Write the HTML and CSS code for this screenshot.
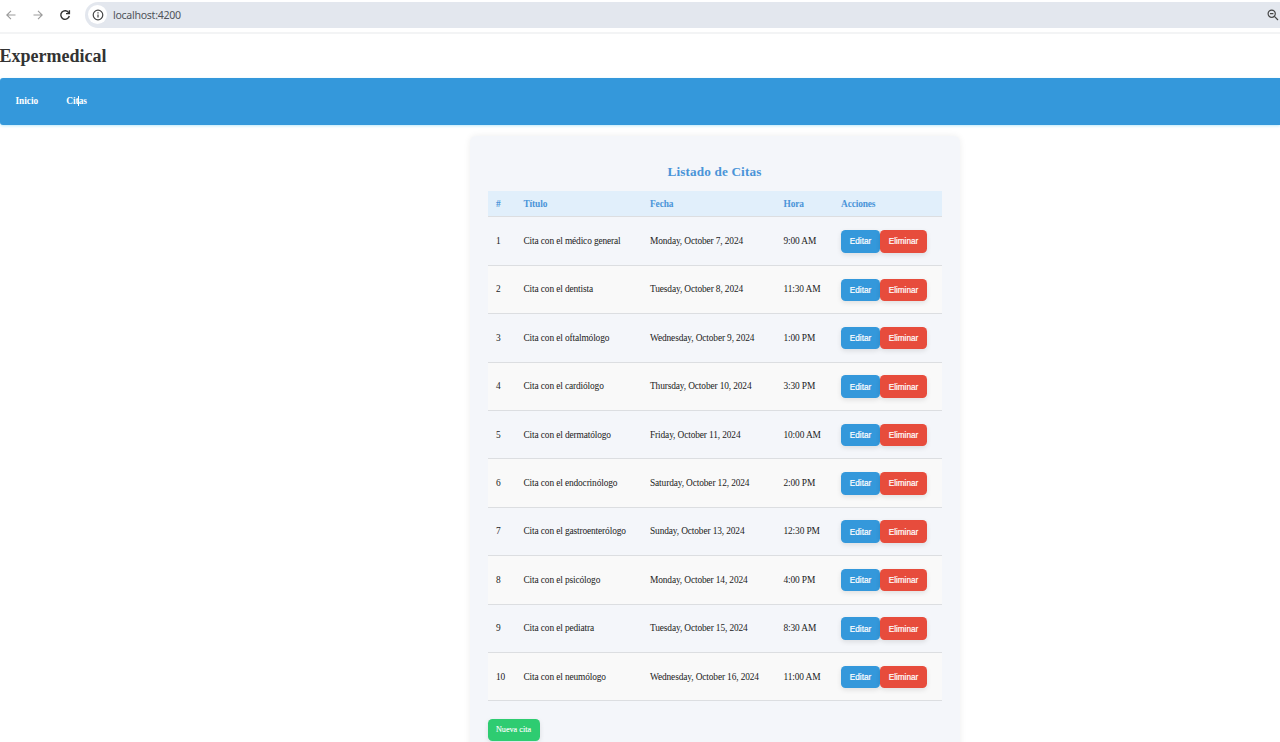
FILE: index.html
```html
<!DOCTYPE html>
<html lang="es">
<head>
<meta charset="utf-8">
<title>Expermedical</title>
<link rel="stylesheet" href="styles.css">
</head>
<body>
<div class="browser">
  <svg class="tool" viewBox="0 0 12 12"><path d="M10.5 6H2M6 1.8 1.8 6 6 10.2"/></svg>
  <svg class="tool" viewBox="0 0 12 12"><path d="M1.5 6H10M6 1.8 10.2 6 6 10.2"/></svg>
  <svg class="tool reload" viewBox="0 0 12 12"><path d="M9.8 3.8A4.3 4.3 0 1 0 10.3 7"/><path d="M10.4 1.2V4.6H7" /></svg>
  <div class="address">
    <span class="info"><svg viewBox="0 0 12 12"><circle cx="6" cy="6" r="4.8"/><path d="M6 5.4V8.6M6 3.3V4.5"/></svg></span>
    <span class="url">localhost:4200</span>
    <svg class="lens" viewBox="0 0 12 12"><circle cx="4.7" cy="4.7" r="3.6"/><path d="M3 4.7H6.4M7.4 7.4 11 11"/></svg>
  </div>
</div>
<h1>Expermedical</h1>
<nav><a>Inicio</a><a class="citas">Citas<i class="caret"></i></a></nav>
<main class="card">
  <h2>Listado de Citas</h2>
  <div class="table">
    <div class="row head"><span>#</span><span>Título</span><span>Fecha</span><span>Hora</span><span>Acciones</span></div>
    <div class="row"><span>1</span><span>Cita con el médico general</span><span>Monday, October 7, 2024</span><span>9:00 AM</span><div class="actions"><button class="edit">Editar</button><button class="delete">Eliminar</button></div></div>
    <div class="row"><span>2</span><span>Cita con el dentista</span><span>Tuesday, October 8, 2024</span><span>11:30 AM</span><div class="actions"><button class="edit">Editar</button><button class="delete">Eliminar</button></div></div>
    <div class="row"><span>3</span><span>Cita con el oftalmólogo</span><span>Wednesday, October 9, 2024</span><span>1:00 PM</span><div class="actions"><button class="edit">Editar</button><button class="delete">Eliminar</button></div></div>
    <div class="row"><span>4</span><span>Cita con el cardiólogo</span><span>Thursday, October 10, 2024</span><span>3:30 PM</span><div class="actions"><button class="edit">Editar</button><button class="delete">Eliminar</button></div></div>
    <div class="row"><span>5</span><span>Cita con el dermatólogo</span><span>Friday, October 11, 2024</span><span>10:00 AM</span><div class="actions"><button class="edit">Editar</button><button class="delete">Eliminar</button></div></div>
    <div class="row"><span>6</span><span>Cita con el endocrinólogo</span><span>Saturday, October 12, 2024</span><span>2:00 PM</span><div class="actions"><button class="edit">Editar</button><button class="delete">Eliminar</button></div></div>
    <div class="row"><span>7</span><span>Cita con el gastroenterólogo</span><span>Sunday, October 13, 2024</span><span>12:30 PM</span><div class="actions"><button class="edit">Editar</button><button class="delete">Eliminar</button></div></div>
    <div class="row"><span>8</span><span>Cita con el psicólogo</span><span>Monday, October 14, 2024</span><span>4:00 PM</span><div class="actions"><button class="edit">Editar</button><button class="delete">Eliminar</button></div></div>
    <div class="row"><span>9</span><span>Cita con el pediatra</span><span>Tuesday, October 15, 2024</span><span>8:30 AM</span><div class="actions"><button class="edit">Editar</button><button class="delete">Eliminar</button></div></div>
    <div class="row"><span>10</span><span>Cita con el neumólogo</span><span>Wednesday, October 16, 2024</span><span>11:00 AM</span><div class="actions"><button class="edit">Editar</button><button class="delete">Eliminar</button></div></div>
  </div>
  <button class="new">Nueva cita</button>
</main>
</body>
</html>
```
FILE: styles.css
```css
* { box-sizing: border-box; }
body { margin: 0; height: 742px; overflow: hidden; background: #fff; font-family: "Liberation Serif", serif; color: #222; }
svg { fill: none; stroke: #444; stroke-width: 1.2; }
.browser { display: flex; align-items: center; height: 34px; padding: 0 0 3px 5px; border-bottom: 2px solid #f3f4f5; }
.tool { width: 12px; height: 12px; margin-right: 15px; stroke: #9b9b9b; stroke-width: 1.1; }
.reload { stroke: #333; stroke-width: 1.4; margin-right: 14px; }
.address { display: flex; align-items: center; flex: 1; height: 26px; padding: 0 1px 0 3px; background: #e3e7ee; border-radius: 13px 0 0 13px; }
.info { display: flex; align-items: center; justify-content: center; width: 19px; height: 19px; border-radius: 50%; background: #fff; }
.info svg { width: 12px; height: 12px; }
.url { flex: 1; margin-left: 6px; padding-top: 1px; font: 10.6px "Noto Sans", sans-serif; letter-spacing: -.29px; color: #50545a; }
.lens { width: 12px; height: 12px; }
h1 { height: 44px; margin: 0 0 0 -.5px; font-size: 18px; line-height: 45px; color: #333; }
nav { display: flex; height: 47px; padding-left: 15.5px; gap: 28px; background: #3498db; border-radius: 3px 0 0 3px; box-shadow: 0 1px 3px #bdeafa; color: #fff; font-size: 9.3px; font-weight: bold; line-height: 47px; }
.citas { position: relative; }
.caret { position: absolute; left: 12px; top: 18px; width: 1px; height: 10px; background: #fff; }
.card { width: 490px; height: 640px; margin: 11px 0 0 469.5px; padding: 27.4px 18px 0; background: #f4f6fa; border-radius: 6px; box-shadow: 0 0 7px rgba(0,0,0,.07); }
h2 { height: 28px; margin: 0; text-align: center; font-size: 13.2px; line-height: 18px; letter-spacing: .15px; color: #4a94d8; }
.table { width: 454px; font-size: 9.4px; letter-spacing: -.13px; }
.row { display: grid; grid-template-columns: 27.5px 126.5px 133.5px 57.5px 1fr; align-items: center; height: 48.4px; padding-left: 8.5px; border-bottom: 1px solid #dcdee1; white-space: nowrap; }
.row:nth-child(odd) { background: #f9f9f9; }
.row.head { height: 26px; background: #e1effb; color: #4a94d8; font-weight: bold; }
.actions { display: flex; padding-top: .6px; }
button { height: 22.5px; padding: 0; border: 0; border-radius: 4.5px; color: #fff; box-shadow: 0 2px 5px rgba(0,0,0,.1); }
.edit, .delete { padding-top: 1px; font: 8.2px "Liberation Sans", sans-serif; -webkit-text-stroke: .2px #fff; }
.edit { width: 39px; background: #3498db; }
.delete { width: 47px; background: #e74c3c; }
.new { width: 52px; margin-top: 17.4px; background: #2ecc71; font: 8.2px "Liberation Serif", serif; -webkit-text-stroke: .1px #fff; }
```
